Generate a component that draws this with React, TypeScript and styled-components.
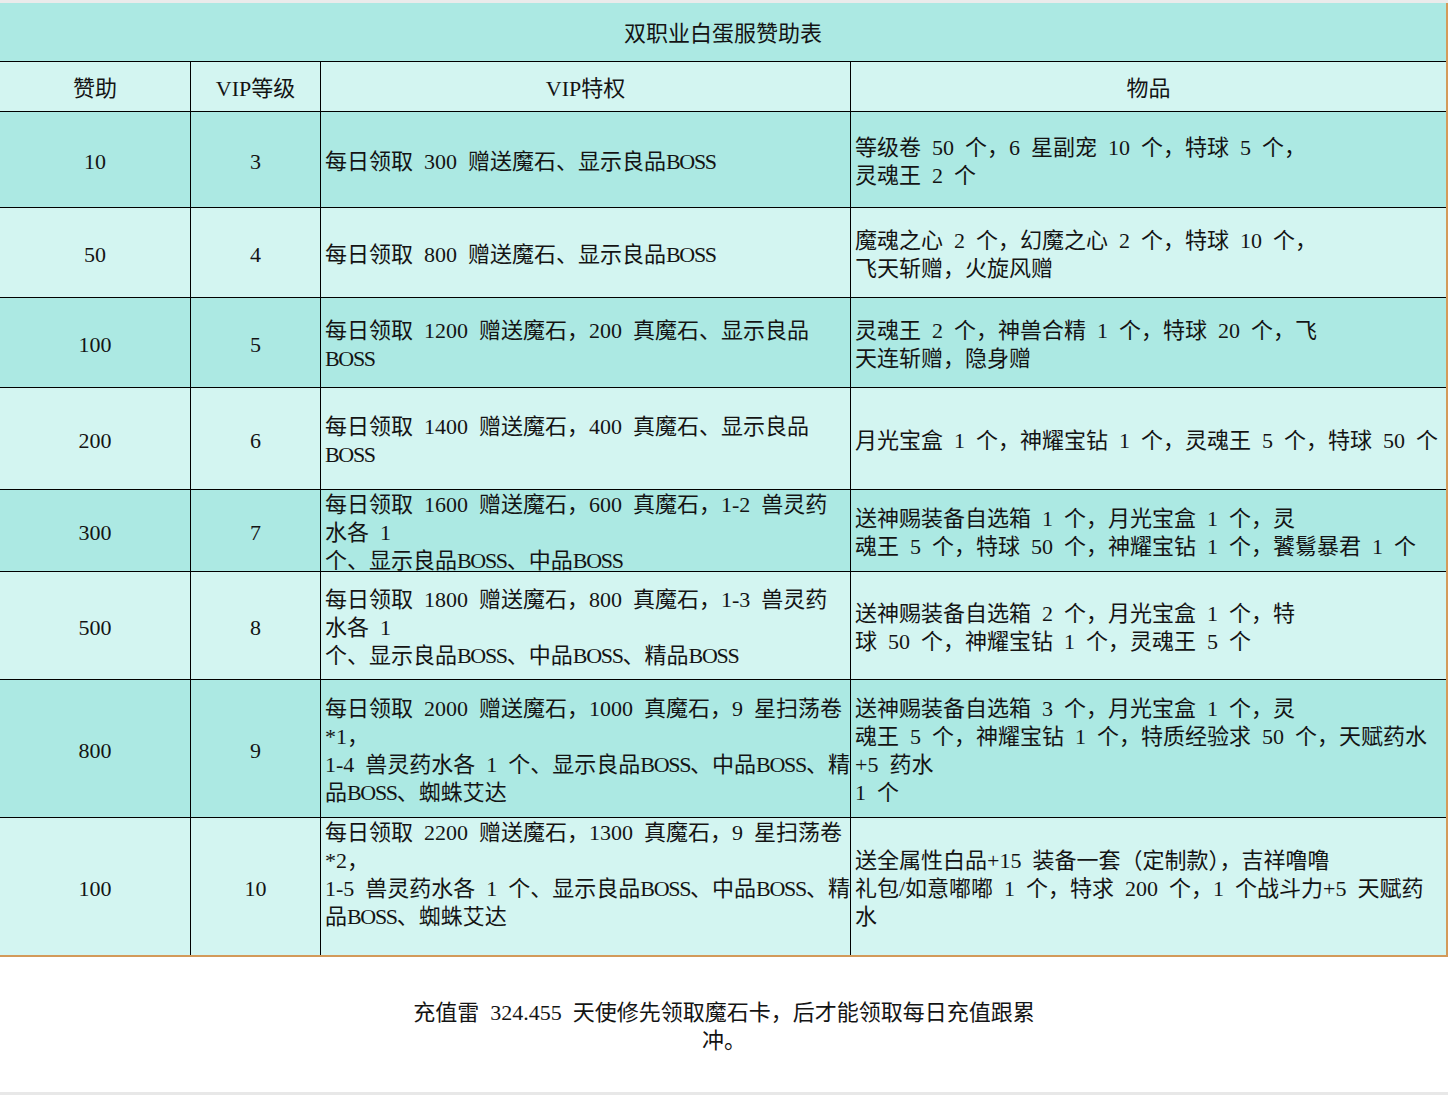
import React from "react";
import styled, { createGlobalStyle } from "styled-components";

const DARK_ROW = "#ace9e3";
const LIGHT_ROW = "#d3f5f1";
const SHEET_EDGE = "#d39a5a";

type Tone = "dark" | "light";

type SponsorRow = {
    amount: string;
    vip: string;
    perks: string[];
    items: string[];
    height: number;
    tone: Tone;
};

const ROWS: SponsorRow[] = [
    {
        amount: "10",
        vip: "3",
        perks: ["每日领取 300 赠送魔石、显示良品BOSS"],
        items: ["等级卷 50 个，6 星副宠 10 个，特球 5 个，", "灵魂王 2 个"],
        height: 96,
        tone: "dark",
    },
    {
        amount: "50",
        vip: "4",
        perks: ["每日领取 800 赠送魔石、显示良品BOSS"],
        items: ["魔魂之心 2 个，幻魔之心 2 个，特球 10 个，", "飞天斩赠，火旋风赠"],
        height: 90,
        tone: "light",
    },
    {
        amount: "100",
        vip: "5",
        perks: ["每日领取 1200 赠送魔石，200 真魔石、显示良品", "BOSS"],
        items: ["灵魂王 2 个，神兽合精 1 个，特球 20 个，飞", "天连斩赠，隐身赠"],
        height: 90,
        tone: "dark",
    },
    {
        amount: "200",
        vip: "6",
        perks: ["每日领取 1400 赠送魔石，400 真魔石、显示良品", "BOSS"],
        items: ["月光宝盒 1 个，神耀宝钻 1 个，灵魂王 5 个，特球 50 个"],
        height: 102,
        tone: "light",
    },
    {
        amount: "300",
        vip: "7",
        perks: [
            "每日领取 1600 赠送魔石，600 真魔石，1-2 兽灵药",
            "水各 1",
            "个、显示良品BOSS、中品BOSS",
        ],
        items: [
            "送神赐装备自选箱 1 个，月光宝盒 1 个，灵",
            "魂王 5 个，特球 50 个，神耀宝钻 1 个，饕鬄暴君 1 个",
        ],
        height: 82,
        tone: "dark",
    },
    {
        amount: "500",
        vip: "8",
        perks: [
            "每日领取 1800 赠送魔石，800 真魔石，1-3 兽灵药",
            "水各 1",
            "个、显示良品BOSS、中品BOSS、精品BOSS",
        ],
        items: [
            "送神赐装备自选箱 2 个，月光宝盒 1 个，特",
            "球 50 个，神耀宝钻 1 个，灵魂王 5 个",
        ],
        height: 108,
        tone: "light",
    },
    {
        amount: "800",
        vip: "9",
        perks: [
            "每日领取 2000 赠送魔石，1000 真魔石，9 星扫荡卷",
            "*1，",
            "1-4 兽灵药水各 1 个、显示良品BOSS、中品BOSS、精",
            "品BOSS、蜘蛛艾达",
        ],
        items: [
            "送神赐装备自选箱 3 个，月光宝盒 1 个，灵",
            "魂王 5 个，神耀宝钻 1 个，特质经验求 50 个，天赋药水",
            "+5 药水",
            "1 个",
        ],
        height: 138,
        tone: "dark",
    },
    {
        amount: "100",
        vip: "10",
        perks: [
            "每日领取 2200 赠送魔石，1300 真魔石，9 星扫荡卷",
            "*2，",
            "1-5 兽灵药水各 1 个、显示良品BOSS、中品BOSS、精",
            "品BOSS、蜘蛛艾达",
            "",
        ],
        items: [
            "送全属性白品+15 装备一套（定制款），吉祥噜噜",
            "礼包/如意嘟嘟 1 个，特求 200 个，1 个战斗力+5 天赋药",
            "水",
        ],
        height: 137,
        tone: "light",
    },
];

// "BOSS" etwas enger setzen, damit die Zeilen wie im Original in die Spalte passen
const renderLine = (text: string) =>
    text.split(/(BOSS)/).map((part, i) =>
        part === "BOSS" ? <Caps key={i}>{part}</Caps> : part
    );

export default function App() {
    const rowHeights = ROWS.map((r) => `${r.height}px`).join(" ");

    return (
        <>
            <GlobalStyle />
            <Page>
                <TopStrip />
                <Sheet style={{ gridTemplateRows: `59px 50px ${rowHeights}` }}>
                    <TitleCell>双职业白蛋服赞助表</TitleCell>

                    <NumCell $tone="light">赞助</NumCell>
                    <NumCell $tone="light">VIP等级</NumCell>
                    <NumCell $tone="light">VIP特权</NumCell>
                    <NumCell $tone="light" $lastCol>
                        物品
                    </NumCell>

                    {ROWS.map((row, idx) => {
                        const last = idx === ROWS.length - 1;
                        return (
                            <React.Fragment key={idx}>
                                <NumCell $tone={row.tone} $lastRow={last}>
                                    {row.amount}
                                </NumCell>
                                <NumCell $tone={row.tone} $lastRow={last}>
                                    {row.vip}
                                </NumCell>
                                <TextCell $tone={row.tone} $lastRow={last}>
                                    {row.perks.map((line, i) => (
                                        <Line key={i}>{line ? renderLine(line) : "\u00a0"}</Line>
                                    ))}
                                </TextCell>
                                <TextCell $tone={row.tone} $lastRow={last} $lastCol>
                                    {row.items.map((line, i) => (
                                        <Line key={i}>{renderLine(line)}</Line>
                                    ))}
                                </TextCell>
                            </React.Fragment>
                        );
                    })}
                </Sheet>
                <Footer>
                    <Line>充值雷 324.455 天使修先领取魔石卡，后才能领取每日充值跟累</Line>
                    <Line>冲。</Line>
                </Footer>
                <BottomStrip />
            </Page>
        </>
    );
}

const GlobalStyle = createGlobalStyle`
    html, body {
        margin: 0;
        padding: 0;
        background: #ffffff;
    }

    body {
        font-family: "Liberation Serif", "Noto Sans CJK SC", serif;
        font-size: 22px;
        color: #141414;
    }
`;

const Page = styled.div`
    width: 1448px;
    height: 1095px;
    display: flex;
    flex-direction: column;
    overflow: hidden;
`;

const TopStrip = styled.div`
    height: 3px;
    flex: none;
    background: #ebebeb;
`;

const Sheet = styled.div`
    display: grid;
    grid-template-columns: 191px 130px 530px 1fr;
    border-right: 2px solid ${SHEET_EDGE};
    border-bottom: 2px solid ${SHEET_EDGE};
    box-shadow: 0 1px 0 #fde6c6;
    flex: none;
`;

const Cell = styled.div<{ $tone: Tone; $lastRow?: boolean; $lastCol?: boolean }>`
    box-sizing: border-box;
    background: ${(p) => (p.$tone === "dark" ? DARK_ROW : LIGHT_ROW)};
    border-right: ${(p) => (p.$lastCol ? "none" : "1px solid #000")};
    border-bottom: ${(p) => (p.$lastRow ? "none" : "1px solid #000")};
    line-height: 28px;
    padding-top: 4px;
    display: flex;
    flex-direction: column;
    justify-content: center;
    word-spacing: 5.5px;
    white-space: nowrap;
`;

const NumCell = styled(Cell)`
    flex-direction: row;
    align-items: center;
    justify-content: center;
`;

const TextCell = styled(Cell)`
    padding-left: 4px;
    align-items: flex-start;
`;

const TitleCell = styled.div`
    grid-column: 1 / -1;
    box-sizing: border-box;
    background: ${DARK_ROW};
    border-bottom: 1px solid #000;
    display: flex;
    align-items: center;
    justify-content: center;
    padding-top: 3px;
    line-height: 28px;
`;

const Line = styled.div`
    line-height: 28px;
    white-space: nowrap;
    word-spacing: 5.5px;
`;

const Caps = styled.span`
    letter-spacing: -0.06em;
`;

const Footer = styled.div`
    flex: 1;
    display: flex;
    flex-direction: column;
    align-items: center;
    justify-content: center;
    padding-top: 5px;
    background: #ffffff;
`;

const BottomStrip = styled.div`
    height: 3px;
    flex: none;
    background: #e8e8e8;
`;
